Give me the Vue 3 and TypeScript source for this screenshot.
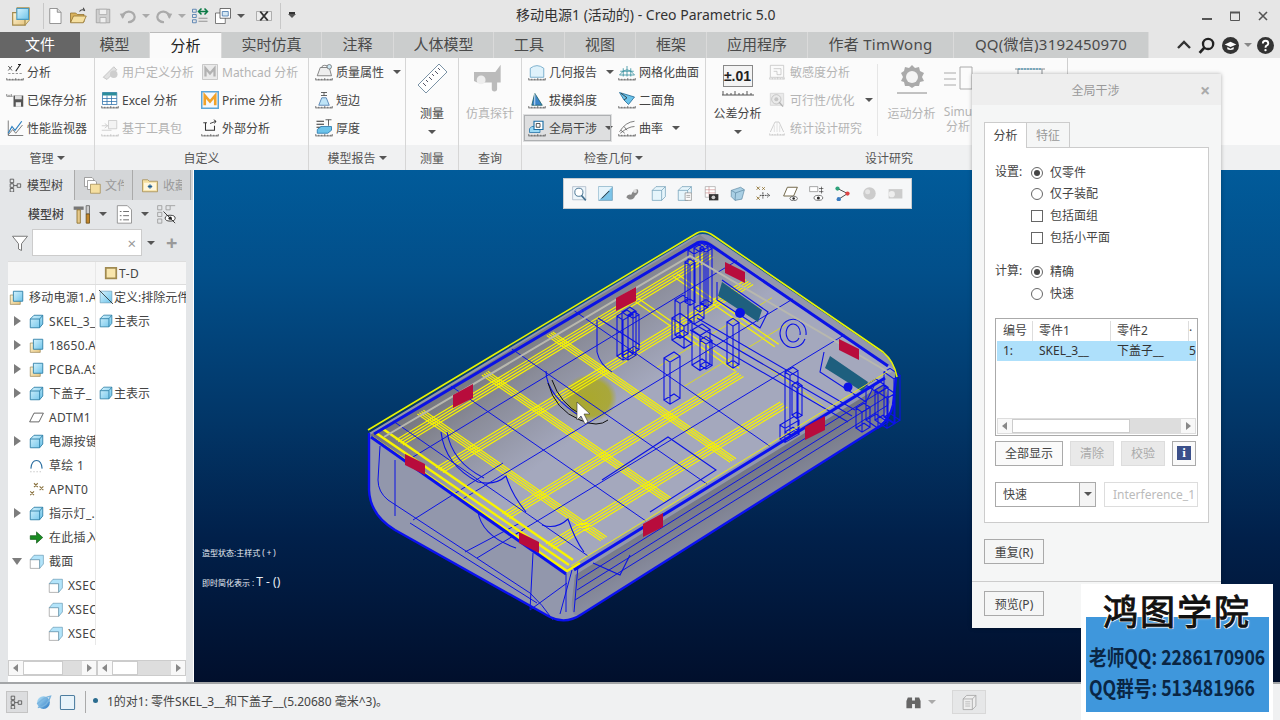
<script setup lang="ts">
interface Item { icon: string; text: string; off?: boolean; caret?: boolean; sel?: boolean }
interface TreeRow { arrow?: string; icon: string; name: string; depth: number; rep?: string; repIcon?: string }

const tabs = [
  { t: '文件', w: 80, c: 'file' }, { t: '模型', w: 70 }, { t: '分析', w: 72, c: 'active' },
  { t: '实时仿真', w: 100 }, { t: '注释', w: 72 }, { t: '人体模型', w: 100 }, { t: '工具', w: 71 },
  { t: '视图', w: 71 }, { t: '框架', w: 71 }, { t: '应用程序', w: 101 }, { t: '作者 TimWong', w: 146, c: 'lat' },
  { t: 'QQ(微信)3192450970', w: 195, c: 'lat' },
]

const manage: Item[] = [
  { icon: 'anaX', text: '分析' }, { icon: 'save2', text: '已保存分析' }, { icon: 'chart', text: '性能监视器' },
]
const custom: Item[] = [
  { icon: 'wrench', text: '用户定义分析', off: true }, { icon: 'mathcad', text: 'Mathcad 分析', off: true },
  { icon: 'excel', text: 'Excel 分析' }, { icon: 'prime', text: 'Prime 分析' },
  { icon: 'toolkit', text: '基于工具包', off: true }, { icon: 'ext', text: '外部分析' },
]
const report: Item[] = [
  { icon: 'mass', text: '质量属性', caret: true }, { icon: 'short', text: '短边' }, { icon: 'thick', text: '厚度' },
]
const check: Item[] = [
  { icon: 'georep', text: '几何报告', caret: true }, { icon: 'mesh', text: '网格化曲面' },
  { icon: 'draft', text: '拔模斜度' }, { icon: 'dihedral', text: '二面角' },
  { icon: 'interf', text: '全局干涉', caret: true, sel: true }, { icon: 'curv', text: '曲率', caret: true },
]
const study: Item[] = [
  { icon: 'sens', text: '敏感度分析', off: true }, { icon: 'feas', text: '可行性/优化', off: true, caret: true },
  { icon: 'stat', text: '统计设计研究', off: true },
]
const floatIcons = ['fZoom', 'fFit', 'fShade', 'fCube', 'fSaved', 'fCam', 'fGlass', 'fDatum', 'fPlane', 'fHide', 'fNodes', 'fBall', 'fProbe']

const tree: TreeRow[] = [
  { icon: 'asm', name: '移动电源1.A', depth: 0, rep: '定义:排除元件', repIcon: 'cutPart' },
  { arrow: 'r', icon: 'part', name: 'SKEL_3_', depth: 1, rep: '主表示', repIcon: 'part' },
  { arrow: 'r', icon: 'asm', name: '18650.A', depth: 1 },
  { arrow: 'r', icon: 'asm', name: 'PCBA.AS', depth: 1 },
  { arrow: 'r', icon: 'part', name: '下盖子_', depth: 1, rep: '主表示', repIcon: 'part' },
  { icon: 'datum', name: 'ADTM1', depth: 1 },
  { arrow: 'r', icon: 'part', name: '电源按键', depth: 1 },
  { icon: 'sketch', name: '草绘 1', depth: 1 },
  { icon: 'apnt', name: 'APNT0', depth: 1 },
  { arrow: 'r', icon: 'part', name: '指示灯_.F', depth: 1 },
  { icon: 'insert', name: '在此插入', depth: 1 },
  { arrow: 'd', icon: 'xsec', name: '截面', depth: 1 },
  { icon: 'xsec', name: 'XSEC', depth: 2 },
  { icon: 'xsec', name: 'XSEC', depth: 2 },
  { icon: 'xsec', name: 'XSEC', depth: 2 },
]

// 壳体顶面的 uv 投影
const L = [370, 435], T = [700, 235], B = [565, 570]
function p(u: number, v: number): string {
  const x = L[0] + u * (T[0] - L[0]) + v * (B[0] - L[0])
  const y = L[1] + u * (T[1] - L[1]) + v * (B[1] - L[1])
  return `${x.toFixed(1)} ${y.toFixed(1)}`
}
function seg(u1: number, v1: number, u2: number, v2: number): string {
  return `M${p(u1, v1)}L${p(u2, v2)}`
}

let yel = ''
for (const v of [0.1, 0.305, 0.645, 0.87]) {
  for (const o of [-0.018, -0.006, 0.006, 0.018]) yel += seg(0.03, v + o, v > 0.6 ? 0.74 : 0.97, v + o)
}
for (const u of [0.135, 0.33, 0.527]) {
  for (const o of [-0.009, -0.003, 0.003, 0.009]) yel += seg(u + o, 0.03, u + o, 0.97)
}
for (const u of [0.74, 0.86]) yel += seg(u, 0.1, u, 0.62) + seg(u + 0.012, 0.1, u + 0.012, 0.62)
const yelThin = seg(0.62, 0.42, 0.97, 0.42) + seg(0.62, 0.56, 0.93, 0.56) + seg(0.8, 0.62, 0.8, 0.97)

let blue = ''
for (const v of [0.19, 0.475, 0.74]) blue += seg(0, v, 1, v)
for (const u of [0.07, 0.245, 0.43, 0.62]) blue += seg(u, 0, u, 1)
// 侧面线条
blue += 'M380 446L378 480Q378 492 388 500L530 593Q542 604 553 620M395 460L395 516M413 520L503 463M465 552L520 523M477 558L523 530'
blue += 'M533 553L530 610L567 583M410 523L537 603M575 600L888 405M577 590L888 396M578 580L886 388'

// 内部立柱: 顶点 (x,y) 向下拉伸 h
function tower(x: number, y: number, wu: number, wv: number, h: number): string {
  const a = [x, y], b = [x + wu, y - wu * 0.6], c = [x + wu + wv, y - wu * 0.6 + wv * 0.69], d = [x + wv, y + wv * 0.69]
  const ring = (dy: number) => [a, b, c, d].map((q, i) => `${i ? 'L' : 'M'}${q[0].toFixed(1)} ${(q[1] + dy).toFixed(1)}`).join('') + 'Z'
  return ring(0) + ring(h) + [a, c, d].map(q => `M${q[0].toFixed(1)} ${q[1].toFixed(1)}V${(q[1] + h).toFixed(1)}`).join('')
}
const parts: [number, number, number, number, number][] = [
  [617, 316, 10, 6, 40], [622, 312, 8, 6, 44], [628, 315, 6, 5, 35],
  [688, 250, 10, 6, 70], [694, 248, 8, 6, 60], [700, 248, 6, 6, 55], [685, 262, 5, 5, 40],
  [675, 300, 8, 5, 35], [672, 318, 8, 12, 22], [692, 330, 10, 8, 35], [700, 340, 6, 6, 25],
  [664, 358, 10, 6, 42], [727, 322, 6, 6, 42],
  [785, 372, 8, 5, 60], [792, 385, 5, 5, 30], [780, 425, 14, 5, 14],
  [866, 385, 10, 12, 35], [875, 390, 8, 12, 30], [884, 372, 6, 10, 45], [856, 408, 8, 6, 20],
]
const towers = parts.map(a => tower(...a)).join('')
const ribs = 'M546 371Q546 396 583 418M441 432Q445 465 478 482Q495 486 506 476Q512 495 526 512M447 432Q452 462 484 478'
  + 'M542 525Q556 530 568 519Q575 540 584 552M478 512Q482 536 516 548M593 563L620 575L630 555'
  + 'M597 320V352Q600 365 612 372M598 318L640 345M697 318L855 410M694 324L852 416M690 330L848 422'
  + 'M602 480L668 437L716 470L650 512M717 282V300L760 328L768 312L722 280M824 352L820 372L866 402L874 386'
  + 'M806 335A13 14 0 1 0 805 339M800 335A7 9 0 1 0 799 338'
const arcBlack = 'M548 383Q555 410 580 420Q598 428 608 420M552 380Q560 404 582 415'

const reds = [
  [463, 396, 1], [626, 299, 1], [735, 272, -1], [849, 349, -1], [815, 428, 1], [653, 525, 1], [529, 542, -1], [415, 464, -1],
].map(([x, y, d]) => (d > 0
  ? `${x - 10},${y - 1} ${x + 10},${y - 12} ${x + 10},${y + 2} ${x - 10},${y + 12}`
  : `${x - 10},${y - 10} ${x + 10},${y} ${x + 10},${y + 11} ${x - 10},${y + 1}`))
</script>

<template>
  <div class="app">
    <!-- 图标 -->
    <svg class="sprite" width="0" height="0" aria-hidden="true">
      <defs>
        <linearGradient id="cb" x1="0" y1="0" x2="1" y2="1"><stop offset="0" stop-color="#d6f3fd" /><stop offset="1" stop-color="#6cc3ea" /></linearGradient>
        <linearGradient id="yb" x1="0" y1="0" x2="1" y2="1"><stop offset="0" stop-color="#fff6d8" /><stop offset="1" stop-color="#e6c57f" /></linearGradient>
        <linearGradient id="glb" x1="0" y1="0" x2="1" y2="1"><stop offset="0" stop-color="#b8e6fa" /><stop offset="1" stop-color="#2a78c4" /></linearGradient>
        <g id="rule"><path d="M1 22.5H23M1 20V23M5 21V23M9 21V23M13 20V23M17 21V23M21 21V23M23 20V23" fill="none" stroke="#555" stroke-width="1" /></g>
      </defs>
      <symbol id="logoI" viewBox="0 0 24 24"><path d="M2 8H17V23H2Z" fill="url(#yb)" stroke="#a38a4c" stroke-width="1.4" /><path d="M7 2H22V17L17 23V8L7 8Z" fill="#f0dca0" stroke="#a38a4c" /><path d="M7 3H21V16H7Z" fill="url(#cb)" stroke="#4a9ac0" stroke-width="1.3" /></symbol>
      <symbol id="doc" viewBox="0 0 24 24"><path d="M5 2H15L20 7V22H5Z" fill="#fff" stroke="#777" /><path d="M15 2V7H20" fill="#ddd" stroke="#777" /></symbol>
      <symbol id="open" viewBox="0 0 24 24"><path d="M2 8H9L11 10H20V20H2Z" fill="#d9b25e" stroke="#8e6d2a" /><path d="M2 21L6 12H23L19 21Z" fill="#f5dfa0" stroke="#8e6d2a" /><path d="M14 6Q17 2 21 5L19 1" fill="none" stroke="#444" stroke-width="1.4" /></symbol>
      <symbol id="saveG" viewBox="0 0 24 24"><path d="M3 3H21V21H3Z" fill="#cfcfcf" stroke="#999" /><path d="M7 3H17V10H7ZM8 14H16V21H8Z" fill="#eee" stroke="#aaa" /></symbol>
      <symbol id="undo" viewBox="0 0 24 24"><path d="M5 14A8 7 0 1 1 12 20" fill="none" stroke="#aaa" stroke-width="3" /><path d="M1 9L9 8L5 16Z" fill="#aaa" /></symbol>
      <symbol id="redo" viewBox="0 0 24 24"><path d="M19 14A8 7 0 1 0 12 20" fill="none" stroke="#aaa" stroke-width="3" /><path d="M23 9L15 8L19 16Z" fill="#aaa" /></symbol>
      <symbol id="regen" viewBox="0 0 24 24"><path d="M2 3H7V7H2ZM2 10H7V14H2ZM2 17H7V21H2Z" fill="none" stroke="#3b6ea5" /><path d="M10 19H22M10 15H22" stroke="#777" /><path d="M11 6H21M18 2L22 6L18 10M14 2L10 6L14 10" fill="none" stroke="#0a7a45" stroke-width="2" /></symbol>
      <symbol id="wins" viewBox="0 0 24 24"><path d="M2 8H15V22H2Z" fill="#fff" stroke="#555" /><path d="M8 2H22V15H8Z" fill="#fff" stroke="#444" /><path d="M11 6H19V12H11Z" fill="#d6e8f3" stroke="#3b6ea5" /></symbol>
      <symbol id="closeW" viewBox="0 0 24 24"><path d="M2 6H22V18H2Z" fill="#eee" stroke="#999" /><path d="M7 6L17 18M17 6L7 18" stroke="#333" stroke-width="2.6" /></symbol>

      <symbol id="anaX" viewBox="0 0 24 24"><path d="M3 4L8 10M8 4L3 10" stroke="#555" stroke-width="1.3" /><path d="M13 11L19 2M20 2H16" stroke="#222" stroke-width="1.5" /><path d="M3 14H21" stroke="#777" stroke-dasharray="3 2" /><use href="#rule" /></symbol>
      <symbol id="save2" viewBox="0 0 24 24"><path d="M1 7V4M4 7V5M7 7V4M1 7H9" stroke="#666" /><path d="M10 6H23V21H10Z" fill="#555" /><path d="M12 6H21V11H12Z" fill="#ddd" /><path d="M13 15H20V21H13Z" fill="#eee" /></symbol>
      <symbol id="chart" viewBox="0 0 24 24"><path d="M3 2V22H23" fill="none" stroke="#555" /><path d="M3 19L8 10L12 15L21 3" fill="none" stroke="#2a7fc0" stroke-width="1.6" /><path d="M3 21L9 14L13 19L22 8" fill="none" stroke="#555" /></symbol>
      <symbol id="wrench" viewBox="0 0 24 24"><path d="M3 19L17 5L21 9L8 22Z" fill="#ccc" stroke="#888" /><circle cx="17" cy="15" r="5" fill="#aaa" /></symbol>
      <symbol id="mathcad" viewBox="0 0 24 24"><path d="M2 2H22V22H2Z" fill="#ddd" stroke="#888" /><path d="M6 18V7L12 14L18 7V18" fill="none" stroke="#777" stroke-width="3" /></symbol>
      <symbol id="excel" viewBox="0 0 24 24"><path d="M2 2H21V18H2Z" fill="#fff" stroke="#2a6ea8" /><path d="M2 2H21V6H2Z" fill="#2b8d9a" /><path d="M2 10H21M2 14H21M8 6V18M14 6V18" stroke="#2a6ea8" /><use href="#rule" /></symbol>
      <symbol id="prime" viewBox="0 0 24 24"><path d="M1 1H23V23H1Z" fill="#f4f9fd" stroke="#5aa6da" stroke-width="2" /><path d="M5 19V6L12 14L19 6V19" fill="none" stroke="#f0a22a" stroke-width="3.5" /></symbol>
      <symbol id="toolkit" viewBox="0 0 24 24"><path d="M10 2H21V13H10Z" fill="#eee" stroke="#999" /><path d="M1 9H9M1 15H14M5 6L9 9L5 12" fill="none" stroke="#999" /><use href="#rule" opacity=".6" /></symbol>
      <symbol id="ext" viewBox="0 0 24 24"><path d="M6 5V15H18V9" fill="none" stroke="#333" stroke-width="1.4" /><path d="M3 5H8M12 6L20 3M17 1L20 3L18 6" fill="none" stroke="#333" stroke-width="1.2" /><use href="#rule" /></symbol>
      <symbol id="mass" viewBox="0 0 24 24"><path d="M3 17L7 6H19L22 17Z" fill="#eee" stroke="#666" /><path d="M9 6A4 3 0 0 1 17 6" fill="none" stroke="#666" /><circle cx="19" cy="5" r="3" fill="#cde9f6" stroke="#666" /><use href="#rule" /></symbol>
      <symbol id="short" viewBox="0 0 24 24"><path d="M8 2H16M8 6H16M12 2V6" stroke="#333" /><path d="M5 19L9 9H15L19 19Z" fill="#bfe4f7" stroke="#3b6ea5" /><use href="#rule" /></symbol>
      <symbol id="thick" viewBox="0 0 24 24"><path d="M2 3H12M2 7H12M2 11H9" stroke="#333" stroke-width="1.5" /><path d="M3 14L8 10H22V15L17 19H3Z" fill="#6cc3ea" stroke="#1c6ea4" /><path d="M14 1H22M18 1V9" stroke="#333" /><use href="#rule" /></symbol>
      <symbol id="georep" viewBox="0 0 24 24"><path d="M3 19V7Q12 0 21 7V19Z" fill="#dff2fb" stroke="#5a9bc0" /><use href="#rule" /></symbol>
      <symbol id="mesh" viewBox="0 0 24 24"><path d="M2 16Q12 2 22 16M7 7V18M12 4V18M17 7V18M3 11H21M2 16H22" fill="none" stroke="#2a8a9a" /><use href="#rule" /></symbol>
      <symbol id="draft" viewBox="0 0 24 24"><path d="M9 3L19 19H5Z" fill="#3b85c9" stroke="#155" /><path d="M9 3V19" stroke="#fff" /><use href="#rule" /></symbol>
      <symbol id="dihedral" viewBox="0 0 24 24"><path d="M2 2L22 8L14 18L8 12Z" fill="#6cc3ea" stroke="#17608e" /><path d="M4 3L12 9L8 12" fill="none" stroke="#222" /><use href="#rule" /></symbol>
      <symbol id="interf" viewBox="0 0 24 24"><path d="M2 13L5 10H16V18H2Z" fill="#9ad9f5" stroke="#1c6ea4" /><path d="M8 3H20V14H8Z" fill="#fff" stroke="#1c6ea4" stroke-width="1.5" /><path d="M11 6H16V11H11Z" fill="none" stroke="#222" /><use href="#rule" /></symbol>
      <symbol id="curv" viewBox="0 0 24 24"><path d="M2 17Q10 4 22 3M3 19Q14 10 22 10M4 15L9 19M8 10L12 15" fill="none" stroke="#555" /><use href="#rule" /></symbol>
      <symbol id="sens" viewBox="0 0 24 24"><path d="M2 2H22V20H2Z" fill="none" stroke="#888" /><path d="M7 7H18V16H12V11H7" fill="none" stroke="#888" /><use href="#rule" opacity=".6" /></symbol>
      <symbol id="feas" viewBox="0 0 24 24"><path d="M2 2H22V20H2Z" fill="#ddd" stroke="#aaa" /><circle cx="11" cy="11" r="7" fill="none" stroke="#777" /><circle cx="11" cy="11" r="3" fill="#999" /><path d="M15 15L21 22" stroke="#777" stroke-width="2" /></symbol>
      <symbol id="stat" viewBox="0 0 24 24"><path d="M2 18L9 3H15L22 18" fill="none" stroke="#888" /><path d="M8 18V8M12 18V3M16 18V8" stroke="#bbb" /><use href="#rule" opacity=".6" /></symbol>

      <symbol id="fZoom" viewBox="0 0 24 24"><path d="M1 1H22V22H1Z" fill="#eef6fb" stroke="#9ab" /><circle cx="11" cy="10" r="6.5" fill="#fff" stroke="#44708f" stroke-width="1.5" /><path d="M15 15L22 23" stroke="#44708f" stroke-width="2.5" /></symbol>
      <symbol id="fFit" viewBox="0 0 24 24"><path d="M1 1H23V23H1Z" fill="#7cc4e8" stroke="#5c8ca8" /><path d="M1 23L23 1V1H1Z" fill="#e6f4fb" /><path d="M6 20L18 8" stroke="#222" stroke-width="1.5" /></symbol>
      <symbol id="fShade" viewBox="0 0 24 24"><path d="M2 18Q4 12 10 14Q12 6 20 5Q24 10 16 16Q14 23 6 21Z" fill="#888" /><circle cx="16" cy="8" r="3" fill="#ddd" /></symbol>
      <symbol id="fCube" viewBox="0 0 24 24"><path d="M2 7H17V23H2ZM2 7L8 1H23V17L17 23M17 7L23 1" fill="#e6f5fb" stroke="#5d90ac" /></symbol>
      <symbol id="fSaved" viewBox="0 0 24 24"><path d="M2 7H17V23H2ZM2 7L8 1H23V11M17 7L23 1" fill="#e6f5fb" stroke="#5d90ac" /><path d="M13 11H23V23H13Z" fill="#fff" stroke="#777" /><path d="M15 15H21M15 18H21" stroke="#777" /></symbol>
      <symbol id="fCam" viewBox="0 0 24 24"><path d="M2 1H18V18H2Z" fill="#fff" stroke="#999" /><path d="M2 6H18M2 11H18M8 1V18" stroke="#c88" /><path d="M8 13H23V23H8Z" fill="#333" /><circle cx="15" cy="18" r="3" fill="#ccc" /></symbol>
      <symbol id="fGlass" viewBox="0 0 24 24"><path d="M2 7L17 2L23 6L19 21L8 23L2 17Z" fill="#a9cfe4" stroke="#55809c" /><path d="M2 7L9 11L23 6M9 11L8 23" fill="none" stroke="#55809c" /></symbol>
      <symbol id="fDatum" viewBox="0 0 24 24"><path d="M1 1L6 6M6 1L1 6M1 17L6 22M6 17L1 22M10 2L14 6M14 2L10 6" stroke="#8a6d2a" stroke-width="1.4" /><path d="M11 10V20M6 15H20M18 12L22 15L18 18" fill="none" stroke="#333" stroke-width="1.4" stroke-dasharray="3 1" /></symbol>
      <symbol id="fPlane" viewBox="0 0 24 24"><path d="M7 2H23L17 16H1Z" fill="#fff" stroke="#6b6040" stroke-width="1.5" /><ellipse cx="17" cy="20" rx="6" ry="3.5" fill="#fff" stroke="#333" /><circle cx="17" cy="20" r="2" fill="#222" /></symbol>
      <symbol id="fHide" viewBox="0 0 24 24"><path d="M1 1H14V9H1Z" fill="#fff" stroke="#777" /><path d="M16 4H23M16 9H23M20 1V12" stroke="#333" /><ellipse cx="15" cy="19" rx="7" ry="4" fill="#fff" stroke="#333" /><circle cx="15" cy="19" r="2.4" fill="#222" /></symbol>
      <symbol id="fNodes" viewBox="0 0 24 24"><path d="M4 4L20 12L6 21" fill="none" stroke="#444" stroke-width="1.5" /><circle cx="4" cy="4" r="3.4" fill="#2fa37b" /><circle cx="20" cy="12" r="3.4" fill="#d44" /><circle cx="6" cy="21" r="3.4" fill="#3b7cc0" /></symbol>
      <symbol id="fBall" viewBox="0 0 24 24"><circle cx="12" cy="12" r="10" fill="#ccc" /><circle cx="9" cy="9" r="4" fill="#e4e4e4" /></symbol>
      <symbol id="fProbe" viewBox="0 0 24 24"><path d="M1 5H23V20H1Z" fill="#ccc" /><circle cx="6" cy="13" r="5" fill="#eee" /></symbol>

      <symbol id="part" viewBox="0 0 24 24"><path d="M2 8H17V22H2ZM2 8L8 2H22V16L17 22M17 8L22 2" fill="url(#cb)" stroke="#2b7ea6" stroke-width="1.4" /></symbol>
      <symbol id="asm" viewBox="0 0 24 24"><path d="M2 8H18V23H2Z" fill="url(#yb)" stroke="#8e7a48" /><path d="M7 2H22V18H7Z" fill="url(#cb)" stroke="#2b7ea6" stroke-width="1.4" /></symbol>
      <symbol id="cutPart" viewBox="0 0 24 24"><path d="M2 2H22V22H2Z" fill="url(#cb)" stroke="#5d90ac" /><path d="M0 0L24 24" stroke="#222" stroke-width="1.3" /></symbol>
      <symbol id="datum" viewBox="0 0 24 24"><path d="M8 5H23L16 19H1Z" fill="#fff" stroke="#555" stroke-width="1.4" /></symbol>
      <symbol id="sketch" viewBox="0 0 24 24"><path d="M3 17Q4 4 12 4Q20 4 21 17" fill="none" stroke="#2b6ea0" stroke-width="1.8" /><path d="M2 22H22" stroke="#999" stroke-dasharray="2 3" /></symbol>
      <symbol id="apnt" viewBox="0 0 24 24"><path d="M8 2L14 8M14 2L8 8M17 7L23 13M23 7L17 13M2 15L8 21M8 15L2 21" stroke="#8a7340" stroke-width="1.7" /></symbol>
      <symbol id="insert" viewBox="0 0 24 24"><path d="M2 9H12V3L22 12L12 21V15H2Z" fill="#1a8c22" stroke="#0a4f10" /></symbol>
      <symbol id="xsec" viewBox="0 0 24 24"><path d="M2 9H17V23H2Z" fill="#fff" stroke="#888" /><path d="M2 9L8 2H23V16L17 23V9Z" fill="#b3e4fa" stroke="#5d90ac" /></symbol>
      <symbol id="treeI" viewBox="0 0 24 24"><path d="M2 2H8V8H2ZM2 10H8V16H2ZM2 18H8V24H2ZM14 10H20V16H14ZM5 8V10M5 16V18M8 13H14" fill="none" stroke="#444" stroke-width="1.3" /></symbol>
      <symbol id="hammer" viewBox="0 0 24 24"><path d="M2 3H14V7H2Z" fill="#777" /><path d="M6 7H10V23H6Z" fill="#e6c98a" stroke="#8a6d2a" /><path d="M17 2H21V12H17Z" fill="#ccc" stroke="#666" /><path d="M17 12H21V23H17Z" fill="#c2862b" stroke="#6a4d1a" /></symbol>
      <symbol id="listI" viewBox="0 0 24 24"><path d="M4 2H16L21 7V23H4Z" fill="#fff" stroke="#888" /><path d="M7 9H9M7 14H9M7 19H9M11 9H18M11 14H18M11 19H18" stroke="#555" /></symbol>
      <symbol id="eyeTree" viewBox="0 0 24 24"><path d="M2 2H7V7H2ZM2 10H7V15H2ZM2 18H7V23H2ZM12 2H17V7H12ZM17 2H23" fill="none" stroke="#999" /><ellipse cx="17" cy="17" rx="6" ry="3.5" fill="#fff" stroke="#222" /><circle cx="17" cy="17" r="2" fill="#222" /><path d="M9 9L23 23" stroke="#222" /></symbol>
      <symbol id="funnel" viewBox="0 0 24 24"><path d="M2 3H22L14 13V22L10 20V13Z" fill="#fff" stroke="#777" stroke-width="1.3" /></symbol>
      <symbol id="files" viewBox="0 0 24 24"><path d="M2 2H12L14 4V14H2Z" fill="#fff" stroke="#888" /><path d="M6 6H16L18 8V18H6Z" fill="#fff" stroke="#888" /><path d="M10 11H23V23H10Z" fill="#f5dfa0" stroke="#a08a50" /></symbol>
      <symbol id="favs" viewBox="0 0 24 24"><path d="M2 5H9L11 7H22V21H2Z" fill="#f5dfa0" stroke="#a08a50" /><path d="M4 9H20V19H4Z" fill="#fff7dd" /><path d="M12 11V17M9 14H15M10 12L14 16M14 12L10 16" stroke="#14568c" stroke-width="1.2" /></symbol>
      <symbol id="globe" viewBox="0 0 24 24"><circle cx="12" cy="12" r="9" fill="url(#glb)" /><path d="M4 19Q18 18 22 3Q14 4 3 14" fill="none" stroke="#7ab4de" stroke-width="2" /></symbol>
      <symbol id="pane" viewBox="0 0 24 24"><rect x="2" y="2" width="20" height="20" rx="1.5" fill="#e8f3fa" stroke="#4d7da0" stroke-width="1.5" /></symbol>
      <symbol id="bino" viewBox="0 0 24 24"><path d="M4 5H10V20H2V10ZM14 5H20L22 10V20H14ZM10 9H14V14H10Z" fill="#666" /></symbol>
      <symbol id="boxS" viewBox="0 0 24 24"><path d="M3 7H16V22H3ZM3 7L8 2H21V17L16 22M16 7L21 2" fill="#eee" stroke="#999" /><path d="M6 11H13M6 14H13M6 17H13" stroke="#aaa" /></symbol>
    </svg>

    <header class="titlebar">
      <div class="qat">
        <svg class="qi big"><use href="#logoI" /></svg>
        <i class="qsep" />
        <svg class="qi q-doc"><use href="#doc" /></svg>
        <svg class="qi q-wide"><use href="#open" /></svg>
        <svg class="qi q-wide"><use href="#saveG" /></svg>
        <svg class="qi"><use href="#undo" /></svg><b class="car pale" />
        <svg class="qi"><use href="#redo" /></svg><b class="car pale" />
        <svg class="qi"><use href="#regen" /></svg>
        <svg class="qi"><use href="#wins" /></svg><b class="car" />
        <svg class="qi q-x"><use href="#closeW" /></svg>
        <i class="qsep" />
        <b class="car bar" />
      </div>
      <span class="wintitle">移动电源1 (活动的) - Creo Parametric 5.0</span>
      <div class="winbtns">
        <svg viewBox="0 0 12 12"><path d="M1 9H11" stroke="#555" stroke-width="2" /></svg>
        <svg viewBox="0 0 12 12"><path d="M1.5 2.5H10.5V10.5H1.5Z" fill="none" stroke="#555" /><path d="M1 2.5H11" stroke="#555" stroke-width="2" /></svg>
        <svg viewBox="0 0 12 12"><path d="M2 2L10 10M10 2L2 10" stroke="#555" stroke-width="1.6" /></svg>
      </div>
    </header>

    <nav class="tabsbar">
      <div v-for="t in tabs" :key="t.t" class="tab" :class="t.c" :style="{ width: t.w + 'px' }">{{ t.t }}</div>
      <div class="tabtools">
        <svg viewBox="0 0 14 14" width="14" height="14"><path d="M1 10L7 4L13 10" fill="none" stroke="#333" stroke-width="2.4" /></svg>
        <svg viewBox="0 0 16 16" width="17" height="17"><circle cx="9.5" cy="6.5" r="4.8" fill="none" stroke="#222" stroke-width="2.2" /><path d="M6 10L1.5 15" stroke="#222" stroke-width="2.6" /></svg>
        <svg viewBox="0 0 16 16" width="17" height="17"><circle cx="8" cy="8" r="8" fill="#333" /><path d="M2.5 7L8 4.5L13.5 7L8 9.5Z" fill="#fff" /><path d="M5 9.5V11.5Q8 13 11 11.5V9.5L8 11Z" fill="#fff" /></svg>
        <b class="car pale2" />
        <svg viewBox="0 0 16 16" width="17" height="17"><circle cx="8" cy="8" r="8" fill="#333" /><path d="M5.5 6.2Q5.5 3.6 8 3.6T10.6 6Q10.6 7.3 9 8.1Q8 8.6 8 10" fill="none" stroke="#fff" stroke-width="1.8" /><circle cx="8" cy="12.3" r="1.1" fill="#fff" /></svg>
      </div>
    </nav>

    <section class="ribbon">
      <div class="grp g-manage">
        <div class="cols">
          <div class="list">
            <div v-for="i in manage" :key="i.text" class="item"><svg class="ic"><use :href="'#' + i.icon" /></svg>{{ i.text }}</div>
          </div>
        </div>
        <div class="glabel">管理<b class="car" /></div>
      </div>
      <div class="grp g-custom">
        <div class="cols grid2">
          <div v-for="i in custom" :key="i.text" class="item" :class="{ off: i.off }"><svg class="ic"><use :href="'#' + i.icon" /></svg>{{ i.text }}</div>
        </div>
        <div class="glabel">自定义</div>
      </div>
      <div class="grp g-report">
        <div class="cols">
          <div class="list">
            <div v-for="i in report" :key="i.text" class="item"><svg class="ic"><use :href="'#' + i.icon" /></svg>{{ i.text }}<b v-if="i.caret" class="car" /></div>
          </div>
        </div>
        <div class="glabel">模型报告<b class="car" /></div>
      </div>
      <div class="grp g-measure">
        <div class="cols">
          <div class="large">
            <svg class="lic" viewBox="0 0 32 32"><path d="M2 22L23 1L31 9L10 30Z" fill="#fff" stroke="#7b93a6" /><path d="M7 20L10 23M10 17L12 19M13 14L16 17M16 11L18 13M19 8L22 11M22 5L24 7" stroke="#556" /></svg>
            <span>测量</span><b class="car" />
          </div>
        </div>
        <div class="glabel">测量</div>
      </div>
      <div class="grp g-query">
        <div class="cols">
          <div class="large off">
            <svg class="lic" viewBox="0 0 36 32"><path d="M0 8H24L30 0V20H26V27A3 3 0 0 1 20 27V20H8A10 7 0 0 1 0 8Z" fill="#bbb" /><circle cx="8" cy="17" r="5" fill="#eee" /></svg>
            <span>仿真探针</span>
          </div>
        </div>
        <div class="glabel">查询</div>
      </div>
      <div class="grp g-check">
        <div class="cols grid2">
          <div v-for="i in check" :key="i.text" class="item" :class="{ sel: i.sel }"><svg class="ic"><use :href="'#' + i.icon" /></svg>{{ i.text }}<b v-if="i.caret" class="car" /></div>
        </div>
        <div class="glabel">检查几何<b class="car" /></div>
      </div>
      <div class="grp g-study">
        <div class="cols">
          <div class="large tol">
            <div class="tolbox">±.01</div>
            <svg class="tolrule" viewBox="0 0 32 6"><path d="M0 5H32M1 1V5M5 3V5M9 3V5M13 1V5M17 3V5M21 3V5M25 1V5M29 3V5" fill="none" stroke="#555" /></svg>
            <span>公差分析</span><b class="car" />
          </div>
          <div class="list studylist">
            <div v-for="i in study" :key="i.text" class="item off"><svg class="ic"><use :href="'#' + i.icon" /></svg>{{ i.text }}<b v-if="i.caret" class="car" /></div>
          </div>
          <i class="vline" />
          <div class="large off motion">
            <svg class="lic" viewBox="0 0 32 32"><path d="M16 2L19 5L23 4L24 8L28 10L26 14L28 18L24 19L23 23H19L16 25L13 23H9L8 19L5 18L7 14L5 10L8 8L9 4L13 5Z" fill="#aaa" /><circle cx="16" cy="14" r="6" fill="#f4f4f4" /><path d="M1 30H31" stroke="#888" /></svg>
            <span>运动分析</span>
          </div>
          <div class="large off simu">
            <svg class="lic" viewBox="0 0 32 32"><path d="M2 10H14M2 16H14M2 22H14M18 4H30V26H18Z" fill="none" stroke="#aaa" /></svg>
            <span>Simu<br />分析</span>
          </div>
          <svg class="peek" viewBox="0 0 32 16"><path d="M1 11H31M4 11V16M28 11V16" stroke="#8a8f94" fill="none" /><path d="M4 11H28" stroke="#2f8fb8" stroke-dasharray="2 1" /></svg>
          <i class="vline top" />
        </div>
        <div class="glabel">设计研究</div>
      </div>
    </section>

    <main class="workspace">
      <aside class="side">
        <div class="sidetabs">
          <div class="stab on"><svg class="tic"><use href="#treeI" /></svg>模型树</div>
          <div class="stab"><svg class="tic l"><use href="#files" /></svg><span>文件</span></div>
          <div class="stab"><svg class="tic l"><use href="#favs" /></svg><span>收藏</span></div>
        </div>
        <div class="sidetool">
          <strong>模型树</strong>
          <svg class="tb"><use href="#hammer" /></svg><b class="car" />
          <svg class="tb"><use href="#listI" /></svg><b class="car" />
          <svg class="tb"><use href="#eyeTree" /></svg>
        </div>
        <div class="filter">
          <svg class="fun"><use href="#funnel" /></svg>
          <div class="finput">×</div>
          <b class="car" />
          <span class="plus">+</span>
        </div>
        <div class="treebox">
          <div class="thead"><div class="c1" /><div class="c2 head"><svg viewBox="0 0 16 16" class="ri"><path d="M2 2H14V14H2Z" fill="#f8e6ad" stroke="#a08a50" stroke-width="2" /></svg>T-D</div></div>
          <div class="tbody">
            <div v-for="(r, n) in tree" :key="n" class="trow">
              <div class="c1" :class="'d' + r.depth">
                <b v-if="r.arrow" class="tw" :class="r.arrow" />
                <svg class="ti"><use :href="'#' + r.icon" /></svg>
                <span>{{ r.name }}</span>
              </div>
              <div class="c2">
                <template v-if="r.rep"><svg class="ri"><use :href="'#' + r.repIcon" /></svg>{{ r.rep }}</template>
              </div>
            </div>
          </div>
          <div class="hscroll">
            <div class="sb"><i class="al" /><i class="th a" /><i class="ar" /></div>
            <div class="sb"><i class="al" /><i class="th b" /><i class="ar" /></div>
          </div>
        </div>
      </aside>

      <div class="viewport">
        <svg class="model" viewBox="194 170 1086 512">
          <defs>
            <linearGradient id="topface" gradientUnits="userSpaceOnUse" x1="510" y1="300" x2="600" y2="420">
              <stop offset="0" stop-color="#66666a" /><stop offset=".5" stop-color="#8a8c99" /><stop offset="1" stop-color="#a4a8bd" />
            </linearGradient>
            <radialGradient id="blob"><stop offset="0" stop-color="#aaa82e" /><stop offset=".75" stop-color="#aaa82e" stop-opacity=".9" /><stop offset="1" stop-color="#aaa82e" stop-opacity="0" /></radialGradient>
            <linearGradient id="sideface" gradientUnits="userSpaceOnUse" x1="640" y1="450" x2="700" y2="560">
              <stop offset="0" stop-color="#56585c" /><stop offset="1" stop-color="#8e92a6" />
            </linearGradient>
          </defs>
          <path d="M369 433L695 236Q704 231 714 238L886 355Q897 365 895 378L893 405Q890 418 880 426L582 614Q566 625 550 617L395 530Q370 515 369 490Z" fill="#9297ac" />
          <path d="M575 575L884 384L890 402L880 426L582 614Q570 620 572 600Z" fill="url(#sideface)" />
          <path d="M370 435L700 235L895 370L565 570Z" fill="url(#topface)" />
          <ellipse cx="590" cy="398" rx="27" ry="24" fill="url(#blob)" />
          <path :d="yel" fill="none" stroke="#f8f400" stroke-width="1.2" />
          <path :d="yelThin" fill="none" stroke="#e8e400" stroke-width=".8" />
          <path :d="blue" fill="none" stroke="#0b12e6" stroke-width="1" />
          <path d="M722 282L762 310L758 322L718 296ZM830 356L868 382L863 392L825 368Z" fill="#1e5f7e" />
          <path :d="ribs" fill="none" stroke="#0b12e6" stroke-width="1.1" />
          <path :d="towers" fill="none" stroke="#0b12e6" stroke-width="1.1" />
          <path :d="arcBlack" fill="none" stroke="#111" stroke-width="1" />
          <circle cx="740" cy="313" r="5" fill="#0b12e6" /><circle cx="848" cy="387" r="4.5" fill="#0b12e6" />
          <path d="M376 433L569 565M372 437L567 571L580 563M383 429L573 560" fill="none" stroke="#f8f400" stroke-width="2.4" />
          <path d="M384 437L690 256L888 372" fill="none" stroke="#b8b8ae" stroke-width="2" />
          <path d="M374 434L697 243Q704 240 712 246L888 366" fill="none" stroke="#0b12e6" stroke-width="3" />
          <path d="M368 430L697 233Q704 229 714 236L883 352Q894 361 897 377" fill="none" stroke="#e8f400" stroke-width="1.6" />
          <path d="M369 433L369 490Q370 515 395 530L550 617Q566 625 582 614L880 426Q890 418 893 405L896 378" fill="none" stroke="#0a10f0" stroke-width="2.4" />
          <path d="M371 437L566 574" fill="none" stroke="#0a10f0" stroke-width="3" />
          <path d="M566 574L566 612M572 570L560 614M578 566L574 612" fill="none" stroke="#0b12e6" />
          <path d="M574 570L885 378" fill="none" stroke="#0a10f0" stroke-width="3" />
          <path d="M571 566L887 372" fill="none" stroke="#f0f000" stroke-width=".9" />
          <polygon v-for="r in reds" :key="r" :points="r" fill="#b80c3c" />
          <path d="M577 402V420L581 416L585 424L588 422L584 414L590 414Z" fill="#fff" stroke="#333" stroke-width=".6" />
        </svg>
        <div class="vtext t1">造型状态:主样式 ( + )</div>
        <div class="vtext t2">即时简化表示 : <em>T - ()</em></div>
        <div class="floatbar">
          <svg v-for="f in floatIcons" :key="f" class="fic"><use :href="'#' + f" /></svg>
        </div>
      </div>
    </main>

    <footer class="status">
      <div class="sticons">
        <span class="stsel"><svg class="sti"><use href="#treeI" /></svg></span>
        <svg class="sti w"><use href="#globe" /></svg>
        <svg class="sti w"><use href="#pane" /></svg>
      </div>
      <i class="stsep" />
      <i class="dot" />
      <span class="msg">1的对1: 零件SKEL_3__和下盖子__(5.20680 毫米^3)。</span>
      <div class="stright">
        <svg class="sti w"><use href="#bino" /></svg><b class="car pale" />
        <span class="stbox"><svg class="sti w"><use href="#boxS" /></svg></span>
      </div>
    </footer>

    <!-- 全局干涉对话框 -->
    <div class="dlg">
      <div class="dtitle"><span>全局干涉</span><em>×</em></div>
      <div class="dbody">
        <div class="dtabs"><div class="dtab on">分析</div><div class="dtab">特征</div></div>
        <div class="panel">
          <div class="optgroup">
            <label>设置:</label>
            <div class="opts">
              <div class="opt"><i class="radio on" />仅零件</div>
              <div class="opt"><i class="radio" />仅子装配</div>
              <div class="opt"><i class="check" />包括面组</div>
              <div class="opt"><i class="check" />包括小平面</div>
            </div>
          </div>
          <div class="optgroup calc">
            <label>计算:</label>
            <div class="opts">
              <div class="opt"><i class="radio on" />精确</div>
              <div class="opt"><i class="radio" />快速</div>
            </div>
          </div>
          <div class="table">
            <div class="throw"><span class="k1">编号</span><span class="k2">零件1</span><span class="k3">零件2</span><span class="k4">·</span></div>
            <div class="throw row"><span class="k1">1:</span><span class="k2">SKEL_3__</span><span class="k3">下盖子__</span><span class="k4">5</span></div>
            <div class="tspace" />
            <div class="sb dsb"><i class="al" /><i class="th c" /><i class="ar" /></div>
          </div>
          <div class="btnrow">
            <button class="btn all">全部显示</button>
            <button class="btn dis">清除</button>
            <button class="btn dis">校验</button>
            <button class="btn info"><span>i</span></button>
          </div>
          <div class="comborow">
            <div class="combo"><span>快速</span><i><b class="car" /></i></div>
            <div class="inp">Interference_1</div>
          </div>
        </div>
        <button class="btn rep">重复(R)</button>
      </div>
      <div class="dfoot"><button class="btn rep">预览(P)</button></div>
    </div>

    <!-- 水印 -->
    <div class="mark">
      <div class="mhead">鸿图学院</div>
      <div class="mblue">
        <div class="mline">老师QQ: 2286170906</div>
        <div class="mline">QQ群号: 513481966</div>
      </div>
    </div>
  </div>
</template>

<style>
html, body { margin: 0; background: #f0f1f2; overflow: hidden; }
</style>

<style scoped>
.app {
  position: relative;
  width: 1280px;
  height: 720px;
  overflow: hidden;
  display: flex;
  flex-direction: column;
  font-family: "Noto Sans", "Noto Sans CJK SC", sans-serif;
  font-size: 12px;
  color: #444;
  background: #f0f1f2;
}
.sprite { position: absolute; }

.car {
  display: inline-block;
  width: 0;
  height: 0;
  border-left: 4px solid transparent;
  border-right: 4px solid transparent;
  border-top: 4px solid #555;
  flex: none;
}
.car.pale { border-top-color: #aaa; }
.car.pale2 { border-top-color: #888; margin: 0 -2px; }
.car.bar { box-shadow: 0 -3px 0 -1px #333; }

/* title */
.titlebar {
  height: 32px;
  background: #e6e6e6;
  display: flex;
  align-items: center;
  position: relative;
  flex: none;
}
.qat { display: flex; align-items: center; gap: 5px; padding-left: 10px; height: 32px; }
.qi { width: 18px; height: 18px; }
.qi.big { width: 20px; height: 20px; margin: 0 5px 0 1px; }
.q-doc { margin-left: -5px; }
.q-wide { margin-right: 2px; }
.q-x { margin-left: 5px; }
.qsep { width: 1px; height: 26px; background: #c8c8c8; margin: 0 2px; }
.wintitle {
  position: absolute;
  left: 516px;
  top: 5px;
  font-size: 14px;
  line-height: 19px;
  color: #333;
  white-space: nowrap;
}
.winbtns { margin-left: auto; display: flex; gap: 16px; padding-right: 11px; }
.winbtns svg { width: 12px; height: 12px; }

/* tabs */
.tabsbar { height: 26px; display: flex; background: #e6e6e6; flex: none; }
.tab {
  background: #cbcdcd;
  border-right: 1px solid #dadada;
  box-sizing: border-box;
  text-align: center;
  font-size: 15px;
  line-height: 25px;
  color: #4a4a4a;
  white-space: nowrap;
}
.tab.file { background: #666; color: #fff; border: 0; }
.tab.active { background: #fafafa; color: #222; border-top: 1px solid #bbb; }
.tab.lat { letter-spacing: .25px; }
.tabtools { margin-left: 28px; display: flex; align-items: center; gap: 7px; }

/* ribbon */
.ribbon { height: 112px; display: flex; background: #fbfbfb; flex: none; }
.grp {
  display: flex;
  flex-direction: column;
  border-right: 1px solid #d6d6d6;
  box-sizing: border-box;
}
.cols { height: 87px; display: flex; }
.glabel {
  height: 25px;
  background: #f0f1f2;
  display: flex;
  align-items: center;
  justify-content: center;
  gap: 3px;
  color: #555;
}
.g-manage { width: 95px; }
.g-custom { width: 214px; }
.g-report { width: 97px; }
.g-measure { width: 53px; }
.g-query { width: 63px; }
.g-check { width: 184px; }
.g-study { flex: 1; border-right: 0; }
.g-study .glabel { padding-right: 208px; }
.list { display: flex; flex-direction: column; }
.grid2 { display: grid; grid-auto-rows: 28px; }
.g-custom .grid2 { grid-template-columns: 100px 110px; }
.g-check .grid2 { grid-template-columns: 90px 90px; }
.item {
  height: 28px;
  display: flex;
  align-items: center;
  gap: 3px;
  padding-left: 6px;
  box-sizing: border-box;
  white-space: nowrap;
  color: #444;
}
.item .car { margin-left: 6px; }
.item.off { color: #b4b4b4; }
.item.off .ic { opacity: .55; }
.item.sel {
  background: #dedfe0;
  outline: 1px solid #aeb0b2;
  outline-offset: -2px;
  margin-left: 1px;
  padding-left: 5px;
  width: 89px;
}
.item.sel .car { margin-left: 5px; }
.ic { width: 18px; height: 18px; flex: none; }
.large {
  display: flex;
  flex-direction: column;
  align-items: center;
  width: 100%;
  padding-top: 5px;
  box-sizing: border-box;
  line-height: 16px;
}
.large span { margin-top: 11px; text-align: center; white-space: nowrap; }
.large .car { margin-top: 8px; }
.large.off { color: #b4b4b4; }
.lic { width: 32px; height: 32px; flex: none; }
.tol { width: 63px; flex: none; padding-top: 7px; }
.tolbox {
  width: 28px;
  border: 1px solid #888;
  background: #f4f4f4;
  font-family: "Liberation Sans", sans-serif;
  font-size: 14px;
  font-weight: 700;
  line-height: 20px;
  height: 20px;
  text-align: center;
  color: #222;
  white-space: nowrap;
}
.tolrule { width: 32px; height: 6px; margin-top: 3px; }
.tol span { margin-top: 10px; }
.studylist { width: 108px; flex: none; }
.studylist .ic { width: 16px; height: 18px; }
.studylist .item { padding-left: 0; gap: 5px; }
.vline { width: 1px; height: 72px; background: #e6e6e6; margin-top: 6px; flex: none; }
.vline.top { height: 16px; margin: 0 0 0 21px; background: #cfcfcf; }
.motion { width: 62px; flex: none; padding-left: 5px; }
.simu { width: 36px; flex: none; line-height: 15px; }
.simu span { margin-top: 9px; }
.peek { width: 32px; height: 16px; margin-left: 38px; flex: none; }

/* main */
.workspace { flex: 1; display: flex; min-height: 0; border-bottom: 2px solid #a3a5a7; }
.side { width: 194px; background: #e4e6e8; display: flex; flex-direction: column; flex: none; border-right: 1px solid #fff; box-sizing: border-box; }
.sidetabs { height: 30px; display: flex; background: #d4d6d8; }
.stab {
  width: 58px;
  display: flex;
  align-items: center;
  gap: 3px;
  padding-left: 7px;
  box-sizing: border-box;
  border-right: 1px solid #aaa;
  color: #999;
  overflow: hidden;
  white-space: nowrap;
}
.stab span { max-width: 19px; overflow: hidden; }
.stab.on { width: 75px; background: #e4e6e8; color: #444; padding-left: 9px; gap: 4px; }
.tic { width: 14px; height: 14px; flex: none; }
.tic.l { width: 20px; height: 18px; }
.sidetool { height: 28px; display: flex; align-items: center; gap: 7px; padding-left: 28px; }
.sidetool strong { font-weight: 500; margin-right: 1px; }
.tb { width: 20px; height: 20px; flex: none; }
.filter { height: 29px; display: flex; align-items: center; gap: 5px; padding-left: 11px; }
.fun { width: 18px; height: 18px; flex: none; margin-right: -2px; }
.finput {
  width: 110px;
  height: 27px;
  box-sizing: border-box;
  background: #fff;
  border: 1px solid #ccc;
  text-align: right;
  padding-right: 5px;
  line-height: 26px;
  font-size: 15px;
  color: #999;
}
.plus { font-size: 20px; font-weight: 700; color: #999; line-height: 20px; margin-left: 6px; }
.treebox {
  margin: 4px 7px 0 8px;
  flex: 1;
  min-height: 0;
  background: #fff;
  display: flex;
  flex-direction: column;
}
.thead { display: flex; background: #f6f6f6; border-top: 1px solid #ddd; border-bottom: 1px solid #ddd; box-sizing: border-box; height: 24px; flex: none; }
.tbody { flex: 1; min-height: 0; overflow: hidden; }
.trow { height: 24px; display: flex; }
.c1 {
  width: 88px;
  flex: none;
  position: relative;
  overflow: hidden;
  display: flex;
  align-items: center;
  gap: 5px;
  white-space: nowrap;
  box-sizing: border-box;
  border-right: 1px solid #e8e8e8;
  letter-spacing: .3px;
}
.c2 { flex: 1; min-width: 0; display: flex; align-items: center; overflow: hidden; white-space: nowrap; padding-left: 3px; }
.c2.head { padding-left: 8px; letter-spacing: .5px; }
.d0 { padding-left: 1px; }
.d1 { padding-left: 21px; }
.d2 { padding-left: 40px; }
.tw { position: absolute; left: 6px; top: 7px; width: 0; height: 0; }
.tw.r { border-left: 7px solid #7d7d7d; border-top: 5px solid transparent; border-bottom: 5px solid transparent; }
.tw.d { left: 4px; top: 9px; border-top: 7px solid #7d7d7d; border-left: 5px solid transparent; border-right: 5px solid transparent; }
.ti { width: 15px; height: 15px; flex: none; }
.ri { width: 14px; height: 14px; flex: none; margin-right: 1px; }
.hscroll { height: 16px; display: flex; flex: none; margin-bottom: 6px; }
.sb {
  flex: 1;
  display: flex;
  align-items: center;
  background: #ddd;
  border: 1px solid #ccc;
  box-sizing: border-box;
  height: 16px;
}
.sb .al, .sb .ar { width: 14px; height: 14px; background: #f8f8f8; position: relative; flex: none; }
.sb .al::after, .sb .ar::after {
  content: "";
  position: absolute;
  top: 3px;
  border-top: 4px solid transparent;
  border-bottom: 4px solid transparent;
}
.sb .al::after { left: 4px; border-right: 5px solid #888; }
.sb .ar::after { left: 5px; border-left: 5px solid #888; }
.sb .ar { margin-left: auto; }
.sb .th { height: 14px; background: #fff; border: 1px solid #ccc; box-sizing: border-box; }
.th.a { width: 40px; }
.th.b { width: 26px; }
.th.c { width: 118px; }

/* viewport */
.viewport {
  flex: 1;
  position: relative;
  overflow: hidden;
  background: linear-gradient(#015b9a 0%, #024f8a 20%, #023566 50%, #01204a 72%, #010f2c 100%);
}
.model { position: absolute; left: 0; top: 0; width: 1086px; height: 512px; }
.vtext {
  position: absolute;
  left: 8px;
  color: #e8eef4;
  font-size: 8px;
  line-height: 10px;
  white-space: nowrap;
}
.vtext em { font-style: normal; font-size: 12px; }
.t1 { top: 378px; }
.t2 { top: 407px; }
.floatbar {
  position: absolute;
  left: 369px;
  top: 8px;
  width: 349px;
  height: 31px;
  box-sizing: border-box;
  background: #f6f7f8;
  border: 1px solid #c8ccd0;
  display: flex;
  align-items: center;
  justify-content: space-between;
  padding: 0 8px;
}
.fic { width: 15px; height: 15px; flex: none; }

/* status */
.status { height: 36px; flex: none; display: flex; align-items: center; background: #f0f1f2; position: relative; }
.sticons { display: flex; align-items: center; gap: 5px; padding-left: 6px; }
.stsel { width: 22px; height: 22px; display: flex; align-items: center; justify-content: center; background: #dcdddf; border: 1px solid #c4c4c4; box-sizing: border-box; }
.sti { width: 14px; height: 14px; flex: none; }
.sti.w { width: 17px; height: 17px; }
.sticons .sti.w { margin-left: 2px; }
.stsep { width: 1px; height: 22px; background: #aaa; margin-left: 9px; }
.dot { width: 5px; height: 5px; border-radius: 50%; background: #2b6c8f; margin: 0 9px 4px 7px; }
.msg { color: #444; margin-top: -3px; }
.stright { position: absolute; left: 905px; top: 6px; display: flex; align-items: center; gap: 6px; }
.stbox { width: 34px; height: 24px; background: #e6e7e8; border: 1px solid #d8d8d8; box-sizing: border-box; display: flex; align-items: center; justify-content: center; margin-left: 10px; }

/* dialog */
.dlg {
  position: absolute;
  left: 972px;
  top: 74px;
  width: 249px;
  height: 554px;
  background: #f5f6f6;
  box-shadow: 0 0 4px rgba(0, 0, 0, .3);
  display: flex;
  flex-direction: column;
}
.dtitle {
  height: 31px;
  background: #eeeeee;
  position: relative;
  text-align: center;
  line-height: 33px;
  color: #999;
  flex: none;
  padding-right: 2px;
}
.dtitle em { position: absolute; left: 228px; top: 0; font-style: normal; font-weight: 700; font-size: 18px; line-height: 32px; color: #aaa; }
.dbody { flex: 1; padding: 17px 12px 0; display: flex; flex-direction: column; }
.dtabs { display: flex; height: 25px; }
.dtab { width: 43px; text-align: center; line-height: 26px; border: 1px solid #ccc; border-bottom: 0; border-left: 0; box-sizing: border-box; color: #999; }
.dtab.on { width: 43px; background: #fff; border-left: 1px solid #ccc; color: #444; position: relative; z-index: 1; height: 26px; }
.panel {
  height: 376px;
  box-sizing: border-box;
  background: #fff;
  border: 1px solid #ccc;
  padding: 14px 10px 0;
  display: flex;
  flex-direction: column;
  width: 225px;
}
.optgroup { display: flex; }
.optgroup label { width: 36px; line-height: 19px; flex: none; }
.calc { margin-top: 13px; }
.opts { display: flex; flex-direction: column; }
.opt { height: 21.6px; display: flex; align-items: center; gap: 7px; line-height: 16px; }
.radio { width: 10px; height: 10px; border: 1px solid #666; border-radius: 50%; position: relative; flex: none; }
.radio.on::after { content: ""; position: absolute; left: 2px; top: 2px; width: 6px; height: 6px; border-radius: 50%; background: #444; }
.check { width: 10px; height: 10px; border: 1px solid #666; flex: none; }
.table {
  margin-top: 13px;
  height: 118px;
  border: 1px solid #aaa;
  box-sizing: border-box;
  padding: 2px 1px 1px;
  display: flex;
  flex-direction: column;
  width: 203px;
}
.throw { display: flex; height: 20px; line-height: 20px; white-space: nowrap; flex: none; overflow: hidden; }
.throw span { box-sizing: border-box; flex: none; padding-left: 6px; border-right: 1px solid #ddd; overflow: hidden; }
.throw.row { background: #aee0fb; color: #333; }
.throw.row span { border: 0; }
.k1 { width: 36px; }
.k2 { width: 78px; }
.k3 { width: 78px; }
.k4 { width: 8px; padding-left: 0 !important; border: 0 !important; }
.tspace { flex: 1; }
.dsb { flex: none; height: 16px; border-color: #ddd; }
.btnrow { display: flex; gap: 7px; margin-top: 5px; }
.btn {
  font: inherit;
  font-size: 12px;
  height: 25px;
  padding: 0;
  border: 1px solid #aaa;
  background: #fafafa;
  color: #444;
  box-sizing: border-box;
}
.btn.all { width: 68px; }
.btn.dis { width: 44px; background: #e9e9e9; color: #aaa; border-color: #ddd; }
.btn.info { width: 24px; display: flex; align-items: center; justify-content: center; }
.btn.info span { width: 14px; height: 14px; background: #3b4f8a; color: #fff; font-family: "Liberation Serif", serif; font-weight: 700; line-height: 14px; font-size: 13px; }
.comborow { display: flex; gap: 8px; margin-top: 16px; }
.combo {
  width: 101px;
  height: 25px;
  border: 1px solid #aaa;
  box-sizing: border-box;
  display: flex;
  align-items: center;
  justify-content: space-between;
  padding-left: 7px;
}
.combo i { width: 15px; height: 23px; border-left: 1px solid #aaa; display: flex; align-items: center; justify-content: center; background: #f4f4f4; }
.inp {
  width: 94px;
  height: 25px;
  border: 1px solid #ddd;
  box-sizing: border-box;
  line-height: 24px;
  padding-left: 8px;
  color: #bbb;
  white-space: nowrap;
  overflow: hidden;
}
.btn.rep { width: 60px; margin-top: 16px; background: #f5f6f6; }
.dfoot { height: 46px; flex: none; border-top: 1px solid #ccc; padding-left: 12px; }
.dfoot .btn.rep { margin-top: 9px; }

/* watermark */
.mark {
  position: absolute;
  left: 1081px;
  top: 584px;
  width: 192px;
  height: 136px;
  background: #fff;
}
.mhead {
  height: 33px;
  position: relative;
  z-index: 1;
  text-align: center;
  font-family: "Noto Sans CJK SC", sans-serif;
  font-size: 35px;
  line-height: 52px;
  letter-spacing: 2px;
  color: #111;
  -webkit-text-stroke: 1px #111;
  text-shadow: 0 0 3px #fff, 1px 1px 0 #fff, -1px -1px 0 #fff, 1px -1px 0 #fff, -1px 1px 0 #fff;
  white-space: nowrap;
}
.mblue {
  margin: 0 4px 0 5px;
  height: 95px;
  background: #3f97dc;
  padding: 24px 0 0 3px;
  box-sizing: border-box;
}
.mline {
  font-family: "Noto Sans CJK SC", sans-serif;
  font-size: 21px;
  line-height: 31px;
  font-weight: 700;
  color: #0a2644;
  white-space: nowrap;
  transform: scaleX(.84);
  transform-origin: left center;
}
</style>
